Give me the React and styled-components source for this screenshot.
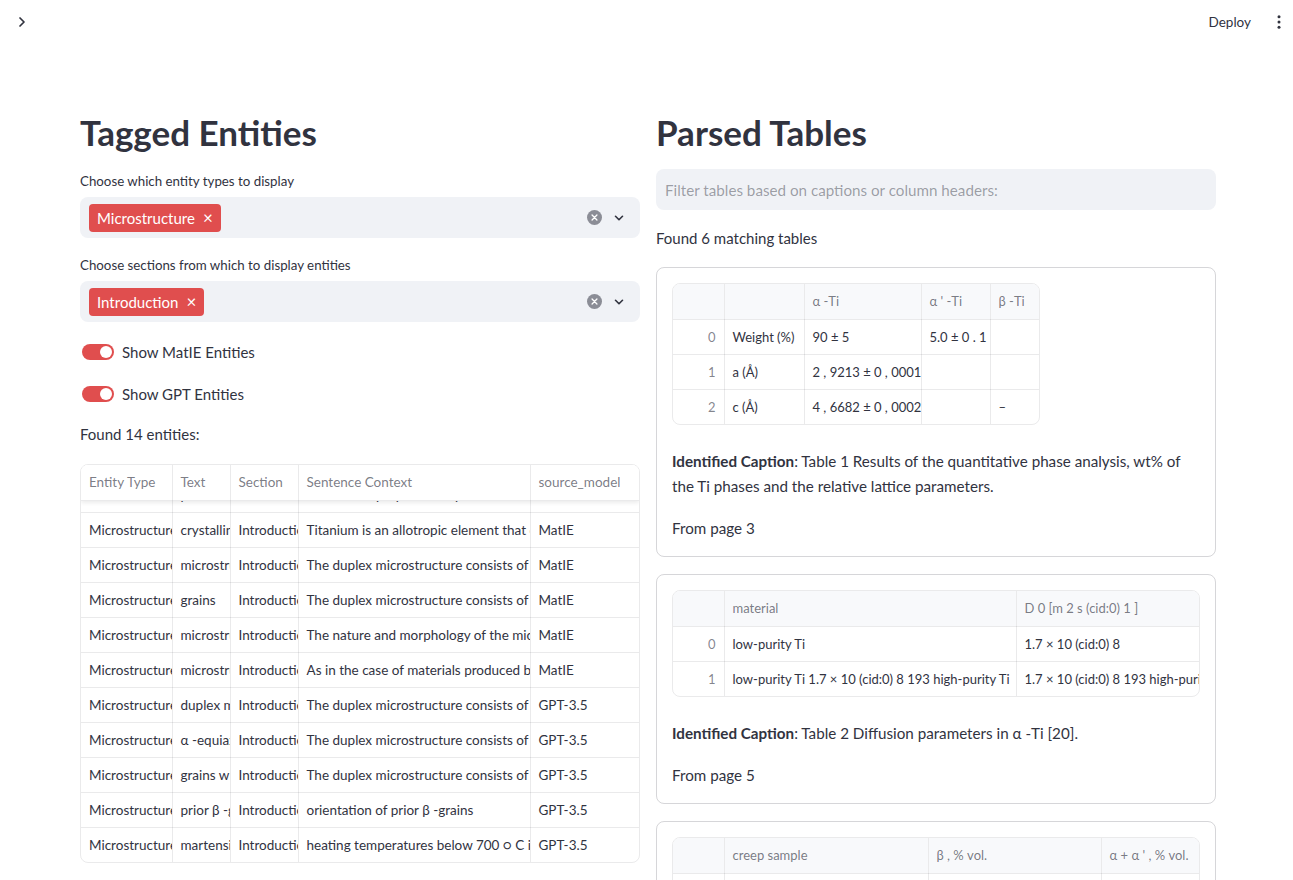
import { useEffect, useRef } from "react";
import styled, { createGlobalStyle } from "styled-components";

//---------------------- DATA -------------------------------
const entityCols = [91, 58, 68, 232, 109];
const entityHead = ["Entity Type", "Text", "Section", "Sentence Context", "source_model"];
const entityRows = [
    ["Microstructure", "phases", "Introduction", "mechanical properties depend on the phase", "MatIE"],
    ["Microstructure", "crystalline", "Introduction", "Titanium is an allotropic element that can", "MatIE"],
    ["Microstructure", "microstructure", "Introduction", "The duplex microstructure consists of large", "MatIE"],
    ["Microstructure", "grains", "Introduction", "The duplex microstructure consists of large", "MatIE"],
    ["Microstructure", "microstructure", "Introduction", "The nature and morphology of the microstructure", "MatIE"],
    ["Microstructure", "microstructure", "Introduction", "As in the case of materials produced by", "MatIE"],
    ["Microstructure", "duplex microstructure", "Introduction", "The duplex microstructure consists of large", "GPT-3.5"],
    ["Microstructure", "α -equiaxed", "Introduction", "The duplex microstructure consists of large", "GPT-3.5"],
    ["Microstructure", "grains with", "Introduction", "The duplex microstructure consists of large", "GPT-3.5"],
    ["Microstructure", "prior β -grains", "Introduction", "orientation of prior β -grains", "GPT-3.5"],
    ["Microstructure", "martensite", "Introduction", "heating temperatures below 700 ○ C in", "GPT-3.5"],
    ["Microstructure", "lamellae", "Introduction", "The duplex microstructure consists of large", "GPT-3.5"],
    ["Microstructure", "colonies", "Introduction", "The duplex microstructure consists of large", "GPT-3.5"],
    ["Microstructure", "α' phase", "Introduction", "heating temperatures below 700 ○ C in", "GPT-3.5"],
];

const parsed = [
    {
        cols: [51, 80, 117, 69, 51],
        head: ["", "", "α -Ti", "α ' -Ti", "β -Ti"],
        rows: [
            ["0", "Weight (%)", "90 ± 5", "5.0 ± 0 . 1", ""],
            ["1", "a (Å)", "2 , 9213 ± 0 , 0001", "", ""],
            ["2", "c (Å)", "4 , 6682 ± 0 , 0002", "", "–"],
        ],
        caption: "Table 1 Results of the quantitative phase analysis, wt% of the Ti phases and the relative lattice parameters.",
        page: 3,
    },
    {
        cols: [51, 292, 185],
        head: ["", "material", "D 0 [m 2 s (cid:0) 1 ]"],
        rows: [
            ["0", "low-purity Ti", "1.7 × 10 (cid:0) 8"],
            ["1", "low-purity Ti 1.7 × 10 (cid:0) 8 193 high-purity Ti", "1.7 × 10 (cid:0) 8 193 high-purity Ti"],
        ],
        caption: "Table 2 Diffusion parameters in α -Ti [20].",
        page: 5,
    },
    {
        cols: [51, 204, 173, 100],
        head: ["", "creep sample", "β , % vol.", "α + α ' , % vol."],
        rows: [
            ["0", "as-received", "8", "92"],
            ["1", "crept 650 °C", "11", "89"],
        ],
        caption: "Table 3 Volume fraction of the phases.",
        page: 6,
    },
];

//---------------------- ICONS ------------------------------
const ChevronRight = () => (
    <svg width="16" height="16" viewBox="0 0 24 24" fill="none" stroke="#31333f" strokeWidth="2.6" strokeLinecap="round" strokeLinejoin="round">
        <path d="M9 6l6 6-6 6" />
    </svg>
);
const Kebab = () => (
    <svg width="16" height="16" viewBox="0 0 16 16" fill="#31333f">
        <circle cx="8" cy="2.8" r="1.5" />
        <circle cx="8" cy="8" r="1.5" />
        <circle cx="8" cy="13.2" r="1.5" />
    </svg>
);
const ClearIcon = () => (
    <svg width="15" height="15" viewBox="0 0 16 16">
        <circle cx="8" cy="8" r="8" fill="#8b8d96" />
        <path d="M5.4 5.4l5.2 5.2M10.6 5.4l-5.2 5.2" stroke="#fff" strokeWidth="1.4" strokeLinecap="round" />
    </svg>
);
const ChevronDown = () => (
    <svg width="14" height="14" viewBox="0 0 24 24" fill="none" stroke="#31333f" strokeWidth="2.8" strokeLinecap="round" strokeLinejoin="round">
        <path d="M6 9l6 6 6-6" />
    </svg>
);

//---------------------- COMPONENT --------------------------
const MultiSelect = ({ value }) => (
    <SelectBox>
        <Chip>
            {value}
            <ChipX>×</ChipX>
        </Chip>
        <SelectIcons>
            <ClearIcon />
            <ChevronDown />
        </SelectIcons>
    </SelectBox>
);

const Toggle = ({ label }) => (
    <ToggleRow>
        <Track><Knob /></Track>
        <span>{label}</span>
    </ToggleRow>
);

const EntityGrid = () => {
    const bodyRef = useRef(null);
    useEffect(() => {
        if (bodyRef.current) bodyRef.current.scrollTop = 23;
    }, []);
    return (
        <GridFrame $height={399}>
            <GridHead>
                <Table $width={558}>
                    <colgroup>{entityCols.map((w, i) => <col key={i} style={{ width: w }} />)}</colgroup>
                    <tbody>
                        <tr>{entityHead.map((h, i) => <HeadCell key={i}>{h}</HeadCell>)}</tr>
                    </tbody>
                </Table>
            </GridHead>
            <GridBody ref={bodyRef}>
                <Table $width={558}>
                    <colgroup>{entityCols.map((w, i) => <col key={i} style={{ width: w }} />)}</colgroup>
                    <tbody>
                        {entityRows.map((r, i) => (
                            <tr key={i}>{r.map((c, j) => <Cell key={j}>{c}</Cell>)}</tr>
                        ))}
                    </tbody>
                </Table>
            </GridBody>
        </GridFrame>
    );
};

const DataTable = ({ t }) => {
    const width = t.cols.reduce((a, b) => a + b, 0);
    return (
        <TableFrame $width={Math.min(width, 528)}>
            <Table $width={width} $size={13}>
                <colgroup>{t.cols.map((w, i) => <col key={i} style={{ width: w }} />)}</colgroup>
                <tbody>
                    <tr>{t.head.map((h, i) => <HeadCell key={i} $tinted>{h}</HeadCell>)}</tr>
                    {t.rows.map((r, i) => (
                        <tr key={i}>
                            {r.map((c, j) => j === 0
                                ? <IndexCell key={j}>{c}</IndexCell>
                                : <Cell key={j}>{c}</Cell>)}
                        </tr>
                    ))}
                </tbody>
            </Table>
        </TableFrame>
    );
};

const App = () => {
    return (
        <>
            <GlobalStyle />
            <Header>
                <ChevronRight />
                <HeaderRight>
                    <Deploy>Deploy</Deploy>
                    <Kebab />
                </HeaderRight>
            </Header>
            <Main>
                <Column>
                    <Title>Tagged Entities</Title>
                    <Label>Choose which entity types to display</Label>
                    <MultiSelect value="Microstructure" />
                    <Label $top={17}>Choose sections from which to display entities</Label>
                    <MultiSelect value="Introduction" />
                    <Toggle label="Show MatIE Entities" />
                    <Toggle label="Show GPT Entities" />
                    <Text $top={16}>Found 14 entities:</Text>
                    <EntityGrid />
                </Column>
                <Column>
                    <Title>Parsed Tables</Title>
                    <Input placeholder="Filter tables based on captions or column headers:" />
                    <Text $top={16}>Found 6 matching tables</Text>
                    <Cards>
                        {parsed.map((t, i) => (
                            <Card key={i}>
                                <DataTable t={t} />
                                <Caption><b>Identified Caption</b>: {t.caption}</Caption>
                                <Caption $top={17}>From page {t.page}</Caption>
                            </Card>
                        ))}
                    </Cards>
                </Column>
            </Main>
        </>
    );
};
export default App;

//----------------------- STYLE -----------------------------
const GlobalStyle = createGlobalStyle`
    body {
        margin: 0;
        background: #fff;
        color: rgb(49, 51, 63);
        font-family: "Source Sans Pro", Lato, "Noto Sans", sans-serif;
    }
    * { box-sizing: border-box; }
`;
const Header = styled.div`
    height: 44px;
    display: flex;
    align-items: center;
    justify-content: space-between;
    padding: 0 6px 0 14px;
`;
const HeaderRight = styled.div`
    display: flex;
    align-items: center;
    gap: 20px;
`;
const Deploy = styled.span`
    font-size: 13.5px;
    color: rgb(49, 51, 63);
`;
const Main = styled.div`
    display: grid;
    grid-template-columns: 560px 560px;
    gap: 16px;
    padding: 63px 0 0 80px;
`;
const Column = styled.div`
    display: flex;
    flex-direction: column;
    min-width: 0;
`;
const Title = styled.h1`
    margin: 0;
    font-size: 35px;
    line-height: 50px;
    font-weight: 700;
    color: rgb(49, 51, 63);
`;
const Label = styled.div`
    margin-top: ${p => p.$top ?? 14}px;
    font-size: 13.3px;
    line-height: 20px;
`;
const Text = styled.div`
    margin-top: ${p => p.$top ?? 0}px;
    font-size: 15px;
    line-height: 24px;
`;
const SelectBox = styled.div`
    margin-top: 6px;
    height: 41px;
    background: #f0f2f6;
    border-radius: 8px;
    display: flex;
    align-items: center;
    justify-content: space-between;
    padding: 0 14px 0 9px;
`;
const Chip = styled.div`
    height: 28px;
    display: flex;
    align-items: center;
    gap: 8px;
    padding: 0 8px;
    background: #e04e4e;
    color: #fff;
    border-radius: 4px;
    font-size: 15px;
`;
const ChipX = styled.span`
    font-size: 17px;
    line-height: 1;
`;
const SelectIcons = styled.div`
    display: flex;
    align-items: center;
    gap: 10px;
`;
const ToggleRow = styled.div`
    margin-top: 18px;
    height: 24px;
    display: flex;
    align-items: center;
    gap: 8px;
    padding-left: 2px;
    font-size: 15px;
`;
const Track = styled.div`
    width: 32px;
    height: 16px;
    border-radius: 8px;
    background: #e04e4e;
    display: flex;
    align-items: center;
    justify-content: flex-end;
    padding: 0 2px;
`;
const Knob = styled.div`
    width: 12px;
    height: 12px;
    border-radius: 50%;
    background: #fff;
`;
const GridFrame = styled.div`
    margin-top: 18px;
    height: ${p => p.$height}px;
    border: 1px solid rgba(49, 51, 63, 0.1);
    border-radius: 8px;
    overflow: hidden;
    display: flex;
    flex-direction: column;
`;
const GridHead = styled.div`
    position: relative;
    z-index: 1;
    box-shadow: 0 2px 4px rgba(0, 0, 0, 0.08);
    background: #fff;
`;
const GridBody = styled.div`
    flex: 1;
    overflow: hidden;
`;
const Table = styled.table`
    width: ${p => p.$width}px;
    table-layout: fixed;
    border-collapse: collapse;
    font-size: ${p => p.$size ?? 13.5}px;
`;
const HeadCell = styled.td`
    height: 35px;
    padding: 0 8px;
    color: rgba(49, 51, 63, 0.65);
    background: ${p => p.$tinted ? "#f8f9fb" : "#fff"};
    border-right: 1px solid rgba(49, 51, 63, 0.1);
    border-bottom: 1px solid rgba(49, 51, 63, 0.1);
    white-space: nowrap;
    overflow: hidden;
`;
const Cell = styled.td`
    height: 35px;
    padding: 0 8px;
    border-right: 1px solid rgba(49, 51, 63, 0.1);
    border-bottom: 1px solid rgba(49, 51, 63, 0.1);
    white-space: nowrap;
    overflow: hidden;
    text-overflow: clip;
`;
const IndexCell = styled(Cell)`
    text-align: right;
    color: rgba(49, 51, 63, 0.6);
`;
const Input = styled.input`
    margin-top: 12px;
    height: 41px;
    border: none;
    outline: none;
    border-radius: 8px;
    background: #f0f2f6;
    padding: 0 9px;
    font-family: inherit;
    font-size: 15.2px;
    color: rgb(49, 51, 63);
    &::placeholder { color: rgba(49, 51, 63, 0.45); }
`;
const Cards = styled.div`
    margin-top: 17px;
    display: flex;
    flex-direction: column;
    gap: 17px;
`;
const Card = styled.div`
    border: 1px solid rgba(49, 51, 63, 0.2);
    border-radius: 8px;
    padding: 15px;
`;
const TableFrame = styled.div`
    width: ${p => p.$width}px;
    border: 1px solid rgba(49, 51, 63, 0.1);
    border-radius: 8px;
    overflow: hidden;
    & tr:last-child td { border-bottom: none; }
    & td:last-child { border-right: none; }
`;
const Caption = styled.p`
    margin: ${p => p.$top ?? 24}px 0 0;
    font-size: 15.2px;
    line-height: 25px;
`;
